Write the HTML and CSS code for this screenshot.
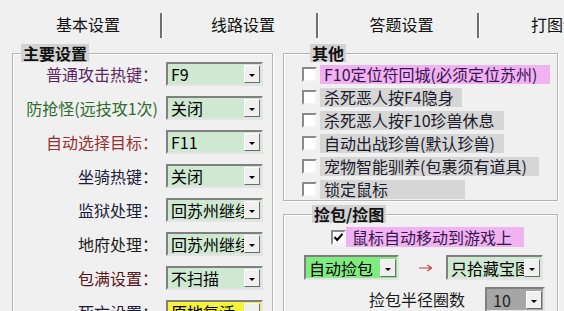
FILE: index.html
```html
<!DOCTYPE html>
<html lang="zh-CN">
<head>
    <meta charset="UTF-8">
    <title>基本设置</title>
    <link rel="stylesheet" href="styles.css">
</head>
<body>
    <div class="tabs">
        <div class="tab tab-1">基本设置</div>
        <div class="tab tab-2">线路设置</div>
        <div class="tab tab-3">答题设置</div>
        <div class="tab tab-4">打图设置</div>
    </div>

    <div class="panel">
        <fieldset class="group group-main">
            <legend>主要设置</legend>
            <div class="form-grid">
                <label class="lbl lbl-purple">普通攻击热键：</label>
                <div class="combo"><span class="combo-text">F9</span><span class="combo-btn"></span></div>

                <label class="lbl lbl-green">防抢怪(远技攻1次)</label>
                <div class="combo"><span class="combo-text">关闭</span><span class="combo-btn"></span></div>

                <label class="lbl lbl-red">自动选择目标：</label>
                <div class="combo"><span class="combo-text">F11</span><span class="combo-btn"></span></div>

                <label class="lbl lbl-navy">坐骑热键：</label>
                <div class="combo"><span class="combo-text">关闭</span><span class="combo-btn"></span></div>

                <label class="lbl lbl-navy">监狱处理：</label>
                <div class="combo"><span class="combo-text clip">回苏州继续</span><span class="combo-btn"></span></div>

                <label class="lbl">地府处理：</label>
                <div class="combo"><span class="combo-text clip">回苏州继续</span><span class="combo-btn"></span></div>

                <label class="lbl lbl-brown">包满设置：</label>
                <div class="combo"><span class="combo-text">不扫描</span><span class="combo-btn"></span></div>

                <label class="lbl lbl-navy">死亡设置：</label>
                <div class="combo combo-yellow"><span class="combo-text">原地复活</span><span class="combo-btn"></span></div>
            </div>
        </fieldset>

        <div class="side">
            <fieldset class="group group-other">
                <legend>其他</legend>
                <div class="check-row">
                    <span class="checkbox"></span>
                    <span class="check-label pink w-550">F10定位符回城(必须定位苏州)</span>
                </div>
                <div class="check-row">
                    <span class="checkbox"></span>
                    <span class="check-label w-462">杀死恶人按F4隐身</span>
                </div>
                <div class="check-row">
                    <span class="checkbox"></span>
                    <span class="check-label w-504">杀死恶人按F10珍兽休息</span>
                </div>
                <div class="check-row">
                    <span class="checkbox"></span>
                    <span class="check-label w-504">自动出战珍兽(默认珍兽)</span>
                </div>
                <div class="check-row">
                    <span class="checkbox"></span>
                    <span class="check-label w-539">宠物智能驯养(包裹须有道具)</span>
                </div>
                <div class="check-row">
                    <span class="checkbox"></span>
                    <span class="check-label w-465">锁定鼠标</span>
                </div>
            </fieldset>

            <fieldset class="group group-pick">
                <legend>捡包/捡图</legend>
                <div class="check-row check-mouse">
                    <span class="checkbox">
                        <svg width="11" height="11" viewBox="0 0 11 11"><polyline points="1.5,5 4.2,8 9.5,1.8" fill="none" stroke="#000" stroke-width="2"/></svg>
                    </span>
                    <span class="check-label pink mouse-label">鼠标自动移动到游戏上</span>
                </div>
                <div class="pick-row">
                    <div class="combo combo-bright"><span class="combo-text">自动捡包</span><span class="combo-btn"></span></div>
                    <svg class="arrow" width="14" height="8" viewBox="0 0 14 8"><path d="M0 4H12M8.5 1L12.5 4L8.5 7" fill="none" stroke="#d23a3a" stroke-width="1.2"/></svg>
                    <div class="combo"><span class="combo-text clip">只拾藏宝图</span><span class="combo-btn"></span></div>
                </div>
                <div class="radius-row">
                    <span class="radius-label">捡包半径圈数</span>
                    <div class="combo combo-gray"><span class="combo-text">10</span><span class="combo-btn"></span></div>
                </div>
            </fieldset>
        </div>
    </div>
</body>
</html>
```

FILE: styles.css
```css
* {
    box-sizing: border-box;
}

body {
    margin: 0;
    width: 564px;
    height: 311px;
    overflow: hidden;
    background-color: #f0f0f0;
    font-family: "Noto Sans CJK SC", "Liberation Sans", sans-serif;
    font-size: 16px;
    color: #1a1a1a;
}

/* tab strip */
.tabs {
    display: flex;
    height: 40px;
    padding: 13px 0 0 8px;
    white-space: nowrap;
    overflow: hidden;
}

.tab {
    flex: none;
    height: 25px;
    line-height: 23px;
    padding-left: 8px;
    text-align: center;
    color: #111;
    border-right: 2px solid #707070;
    box-shadow: 1px 0 0 #fff;
}

.tab-1 { width: 154px; }
.tab-2 { width: 156px; }
.tab-3 { width: 161px; }
.tab-4 { width: 160px; border-right: none; box-shadow: none; }

/* content */
.panel {
    display: flex;
    gap: 10px;
    padding: 4px 0 0 12px;
}

.group {
    margin: 0;
    padding: 0;
    min-width: 0;
    border: 1px solid #b4b4b4;
    box-shadow: inset 1px 1px 0 #fff, 1px 1px 0 #fff;
}

.group legend {
    margin-left: 8px;
    padding: 0 2px;
    line-height: 18px;
    font-weight: bold;
    color: #111;
    background-color: #d2d2d2;
}

.group-main {
    width: 261px;
    height: 290px;
}

.form-grid {
    display: grid;
    grid-template-columns: 1fr 97px;
    grid-auto-rows: 24px;
    column-gap: 8px;
    row-gap: 10px;
    padding: 0 9px 0 4px;
}

.lbl {
    line-height: 24px;
    text-align: right;
    white-space: nowrap;
    color: #1c1c1c;
}

.lbl-purple { color: #5e2660; }
.lbl-green { color: #2e6b2e; }
.lbl-red { color: #963030; }
.lbl-navy { color: #1d1d3a; }
.lbl-brown { color: #5a1616; }

/* combo box */
.combo {
    display: flex;
    align-items: center;
    height: 24px;
    border: 2px solid;
    border-color: #808080 #e4e4e4 #e4e4e4 #808080;
    background-color: #cfe8d1;
}

.combo-text {
    flex: 1;
    min-width: 0;
    padding-left: 3px;
    line-height: 20px;
    white-space: nowrap;
    color: #000;
}

.combo-text.clip {
    overflow: hidden;
}

.combo-btn {
    flex: none;
    display: flex;
    align-items: center;
    justify-content: center;
    width: 16px;
    height: 18px;
    margin-right: 1px;
    padding-top: 3px;
    background-color: #f0f0f0;
    border: 1px solid;
    border-color: #fff #6e6e6e #6e6e6e #fff;
}

.combo-btn::after {
    content: "";
    border-left: 3px solid transparent;
    border-right: 3px solid transparent;
    border-top: 3px solid #000;
}

.combo-yellow { background-color: #f4f23a; }
.combo-bright { background-color: #80ec80; width: 95px; height: 25px; }
.combo-gray { background-color: #a6a6a6; width: 60px; height: 25px; }
.combo-gray .combo-text { color: #222; padding-left: 6px; }

/* right column */
.side {
    display: flex;
    flex-direction: column;
    gap: 4px;
    width: 275px;
}

.group-other {
    padding: 3px 0 1px 18px;
}

.check-row {
    display: flex;
    align-items: center;
    height: 19px;
    margin-bottom: 4px;
}

.check-row:last-child {
    margin-bottom: 0;
}

.checkbox {
    flex: none;
    display: flex;
    align-items: center;
    justify-content: center;
    width: 15px;
    height: 15px;
    background-color: #fff;
    border: 2px solid;
    border-color: #8a8a8a #f4f4f4 #f4f4f4 #8a8a8a;
}

.check-label {
    height: 19px;
    line-height: 19px;
    margin-left: 3px;
    padding-left: 4px;
    white-space: nowrap;
    color: #1a1a2a;
    background-color: #d6d6d6;
}

.pink {
    color: #3a1450;
    background-color: #f0b2f0;
}

.w-550 { width: 230px; }
.w-462 { width: 142px; }
.w-504 { width: 184px; }
.w-539 { width: 219px; }
.w-465 { width: 145px; }

.group-pick {
    height: 130px;
    padding: 4px 0 0 20px;
}

.check-mouse {
    height: 20px;
    margin-bottom: 0;
    padding-left: 27px;
}

.mouse-label {
    height: 20px;
    line-height: 20px;
    width: 178px;
    margin-left: 0;
    padding-left: 6px;
}

.pick-row {
    display: flex;
    align-items: center;
    margin-top: 8px;
}

.pick-row .combo:last-child {
    width: 97px;
    height: 25px;
}

.arrow {
    margin: 0 13px 0 20px;
}

.radius-row {
    display: flex;
    align-items: center;
    margin-top: 7px;
    padding-left: 65px;
}

.radius-label {
    width: 116px;
    line-height: 25px;
    color: #1a1a1a;
}
```
